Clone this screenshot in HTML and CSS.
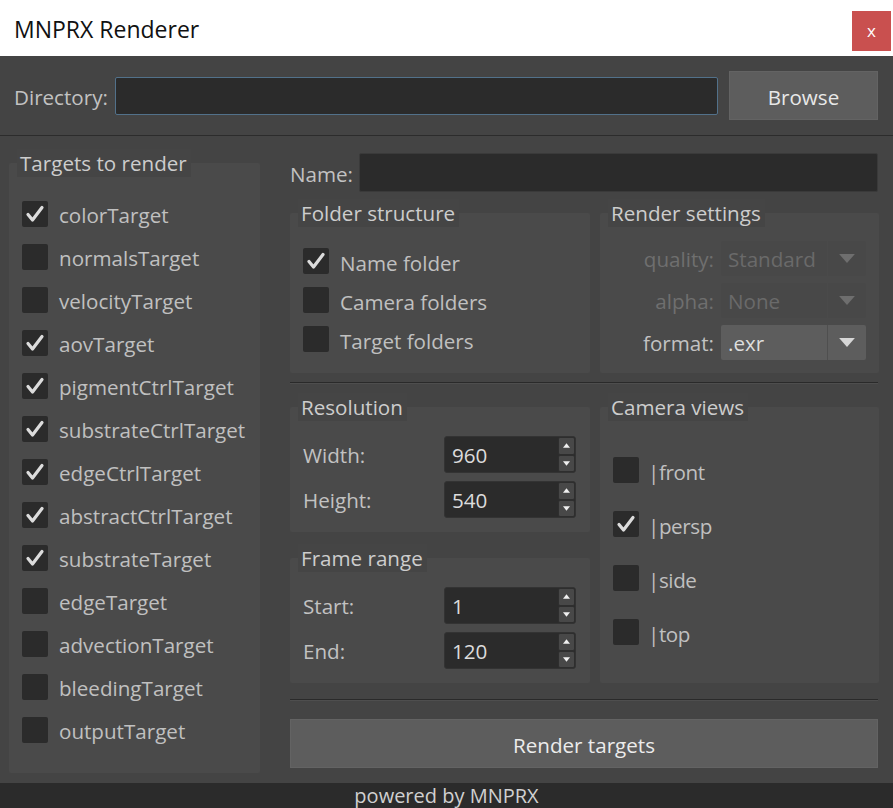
FILE: index.html
```html
<!DOCTYPE html>
<html>
<head>
<meta charset="utf-8">
<link rel="stylesheet" href="styles.css">
</head>
<body>
<div class="window">
  <header class="titlebar">
    <span class="title">MNPRX Renderer</span>
    <div class="close">x</div>
  </header>
  <div class="dirrow">
    <span class="lbl">Directory:</span>
    <div class="input dir"></div>
    <div class="btn browse">Browse</div>
  </div>
  <div class="main">
    <section class="group targets">
      <div class="gtitle">Targets to render</div>
      <div class="gbody list">
        <div class="chkrow"><span class="chk on"><svg viewBox="0 0 26 26"><polyline points="6,13.5 10.5,19 20,6.5"/></svg></span><span class="clbl">colorTarget</span></div>
        <div class="chkrow"><span class="chk"></span><span class="clbl">normalsTarget</span></div>
        <div class="chkrow"><span class="chk"></span><span class="clbl">velocityTarget</span></div>
        <div class="chkrow"><span class="chk on"><svg viewBox="0 0 26 26"><polyline points="6,13.5 10.5,19 20,6.5"/></svg></span><span class="clbl">aovTarget</span></div>
        <div class="chkrow"><span class="chk on"><svg viewBox="0 0 26 26"><polyline points="6,13.5 10.5,19 20,6.5"/></svg></span><span class="clbl">pigmentCtrlTarget</span></div>
        <div class="chkrow"><span class="chk on"><svg viewBox="0 0 26 26"><polyline points="6,13.5 10.5,19 20,6.5"/></svg></span><span class="clbl">substrateCtrlTarget</span></div>
        <div class="chkrow"><span class="chk on"><svg viewBox="0 0 26 26"><polyline points="6,13.5 10.5,19 20,6.5"/></svg></span><span class="clbl">edgeCtrlTarget</span></div>
        <div class="chkrow"><span class="chk on"><svg viewBox="0 0 26 26"><polyline points="6,13.5 10.5,19 20,6.5"/></svg></span><span class="clbl">abstractCtrlTarget</span></div>
        <div class="chkrow"><span class="chk on"><svg viewBox="0 0 26 26"><polyline points="6,13.5 10.5,19 20,6.5"/></svg></span><span class="clbl">substrateTarget</span></div>
        <div class="chkrow"><span class="chk"></span><span class="clbl">edgeTarget</span></div>
        <div class="chkrow"><span class="chk"></span><span class="clbl">advectionTarget</span></div>
        <div class="chkrow"><span class="chk"></span><span class="clbl">bleedingTarget</span></div>
        <div class="chkrow"><span class="chk"></span><span class="clbl">outputTarget</span></div>
      </div>
    </section>
    <div class="right">
      <div class="namerow">
        <span class="lbl">Name:</span>
        <div class="input name"></div>
      </div>
      <div class="row2">
        <section class="group folder">
          <div class="gtitle">Folder structure</div>
          <div class="gbody">
            <div class="chkrow short"><span class="chk on"><svg viewBox="0 0 26 26"><polyline points="6,13.5 10.5,19 20,6.5"/></svg></span><span class="clbl">Name folder</span></div>
            <div class="chkrow short"><span class="chk"></span><span class="clbl">Camera folders</span></div>
            <div class="chkrow short"><span class="chk"></span><span class="clbl">Target folders</span></div>
          </div>
        </section>
        <section class="group settings">
          <div class="gtitle">Render settings</div>
          <div class="gbody formgrid">
            <span class="flbl dis">quality:</span>
            <div class="combo dis"><span class="ctext">Standard</span><span class="carrow"><svg viewBox="0 0 14 8"><polygon points="0,0 14,0 7,8"/></svg></span></div>
            <span class="flbl dis">alpha:</span>
            <div class="combo dis"><span class="ctext">None</span><span class="carrow"><svg viewBox="0 0 14 8"><polygon points="0,0 14,0 7,8"/></svg></span></div>
            <span class="flbl">format:</span>
            <div class="combo"><span class="ctext">.exr</span><span class="carrow"><svg viewBox="0 0 14 8"><polygon points="0,0 14,0 7,8"/></svg></span></div>
          </div>
        </section>
      </div>
      <div class="sep"></div>
      <div class="row3">
        <div class="col">
          <section class="group spins">
            <div class="gtitle">Resolution</div>
            <div class="gbody spingrid">
              <span class="slbl">Width:</span>
              <div class="spin"><span class="sval">960</span><span class="sarrows"><span class="sbtn"><svg viewBox="0 0 8 5"><polygon points="0,5 8,5 4,0"/></svg></span><span class="sbtn"><svg viewBox="0 0 8 5"><polygon points="0,0 8,0 4,5"/></svg></span></span></div>
              <span class="slbl">Height:</span>
              <div class="spin"><span class="sval">540</span><span class="sarrows"><span class="sbtn"><svg viewBox="0 0 8 5"><polygon points="0,5 8,5 4,0"/></svg></span><span class="sbtn"><svg viewBox="0 0 8 5"><polygon points="0,0 8,0 4,5"/></svg></span></span></div>
            </div>
          </section>
          <section class="group spins frame">
            <div class="gtitle">Frame range</div>
            <div class="gbody spingrid">
              <span class="slbl">Start:</span>
              <div class="spin"><span class="sval">1</span><span class="sarrows"><span class="sbtn"><svg viewBox="0 0 8 5"><polygon points="0,5 8,5 4,0"/></svg></span><span class="sbtn"><svg viewBox="0 0 8 5"><polygon points="0,0 8,0 4,5"/></svg></span></span></div>
              <span class="slbl">End:</span>
              <div class="spin"><span class="sval">120</span><span class="sarrows"><span class="sbtn"><svg viewBox="0 0 8 5"><polygon points="0,5 8,5 4,0"/></svg></span><span class="sbtn"><svg viewBox="0 0 8 5"><polygon points="0,0 8,0 4,5"/></svg></span></span></div>
            </div>
          </section>
        </div>
        <section class="group cams">
          <div class="gtitle">Camera views</div>
          <div class="gbody">
            <div class="chkrow tall"><span class="chk"></span><span class="clbl cam">|front</span></div>
            <div class="chkrow tall"><span class="chk on"><svg viewBox="0 0 26 26"><polyline points="6,13.5 10.5,19 20,6.5"/></svg></span><span class="clbl cam">|persp</span></div>
            <div class="chkrow tall"><span class="chk"></span><span class="clbl cam">|side</span></div>
            <div class="chkrow tall"><span class="chk"></span><span class="clbl cam">|top</span></div>
          </div>
        </section>
      </div>
      <div class="sep sep2"></div>
      <div class="btn render">Render targets</div>
    </div>
  </div>
  <footer class="footer">powered by MNPRX</footer>
</div>
</body>
</html>
```

FILE: styles.css
```css
* { box-sizing: border-box; }
html, body { margin: 0; padding: 0; background: #444444; }
body { font-family: "Open Sans", "Noto Sans", sans-serif; font-size: 20.6px; color: #c4c4c4; }

.window { width: 893px; height: 808px; display: flex; flex-direction: column; background: #444444; overflow: hidden; }

.titlebar { height: 56px; flex: none; background: #ffffff; display: flex; justify-content: space-between; align-items: flex-start; }
.title { margin-left: 14px; line-height: 56px; padding-top: 1px; font-size: 23px; color: #111111; }
.close { margin-top: 11px; margin-right: 2px; width: 39px; height: 40px; background: #c9504f; color: #ffffff; font-size: 17px; line-height: 40px; text-align: center; }

.dirrow { height: 80px; flex: none; display: flex; align-items: center; padding: 0 15px 0 14px; border-bottom: 1px solid #2c2c2c; }
.lbl { flex: none; color: #c2c2c2; padding-top: 3px; }
.input { background: #2b2b2b; border: 1px solid #3a3a3a; border-radius: 2px; }
.input.dir { flex: 1; height: 38px; margin-left: 7px; border-color: #52718a; }
.btn { background: #5d5d5d; border: 1px solid #636363; color: #e8e8e8; display: flex; align-items: center; justify-content: center; padding-top: 3px; }
.browse { width: 149px; height: 49px; margin-left: 11px; margin-top: -1px; }

.main { flex: 1; display: flex; min-height: 0; }

.group { display: flex; flex-direction: column; align-items: flex-start; background: #4a4a4a; margin-top: 14px; border-radius: 2px; }
.gtitle { margin-top: -14px; margin-left: 8px; height: 28px; line-height: 27px; padding: 1px 4px 0 3px; background: #454545; color: #cdcdcd; }
.gbody { align-self: stretch; }

.targets { width: 251px; margin: 27px 0 10px 9px; }
.list { padding: 15px 0 0 13px; }

.chkrow { display: flex; align-items: center; height: 43px; }
.chkrow.short { height: 39px; }
.chkrow.tall { height: 54px; }
.chk { width: 26px; height: 26px; flex: none; background: #2b2b2b; border-radius: 2px; display: flex; }
.chk svg { width: 26px; height: 26px; }
.chk polyline { fill: none; stroke: #dcdcdc; stroke-width: 3.2; stroke-linecap: round; stroke-linejoin: round; }
.clbl { margin-left: 11px; color: #c0c0c0; white-space: nowrap; padding-top: 3px; }
.short .clbl { padding-top: 4px; }
.clbl.cam { margin-left: 9px; letter-spacing: -0.4px; }

.right { width: 589px; margin-left: 30px; display: flex; flex-direction: column; }
.namerow { display: flex; align-items: center; margin-top: 17px; height: 39px; }
.input.name { flex: 1; height: 39px; margin-left: 6px; margin-right: 1px; }

.row2 { display: flex; gap: 10px; margin-top: 7px; }
.folder { width: 300px; height: 160px; }
.folder .gbody { padding: 14px 0 0 13px; }
.settings { width: 279px; height: 160px; }
.formgrid { display: grid; grid-template-columns: 1fr 145px; grid-auto-rows: 35px; column-gap: 7px; row-gap: 7px; padding: 14px 13px 0 0; }
.flbl { text-align: right; line-height: 33px; padding-top: 2px; color: #c2c2c2; }
.flbl.dis { color: #6f6f6f; }
.combo { display: flex; background: #5d5d5d; border-radius: 2px; color: #dedede; }
.ctext { flex: 1; padding-left: 7px; padding-top: 2px; line-height: 33px; }
.carrow { width: 39px; flex: none; border-left: 1px solid #4f4f4f; display: flex; align-items: center; justify-content: center; }
.carrow svg { width: 16px; height: 9px; }
.carrow polygon { fill: #d6d6d6; }
.combo.dis { background: #484848; color: #6a6a6a; }
.combo.dis .carrow { border-left-color: #4a4a4a; }
.combo.dis polygon { fill: #6e6e6e; }

.sep { height: 2px; border-top: 1px solid #2a2a2a; border-bottom: 1px solid #4e4e4e; margin-top: 9px; margin-right: 1px; }
.sep2 { margin-top: 16px; }

.row3 { display: flex; gap: 10px; margin-top: 9px; }
.col { width: 300px; display: flex; flex-direction: column; }
.spins { height: 125px; }
.frame { margin-top: 26px; }
.spingrid { display: grid; grid-template-columns: 141px 132px; grid-auto-rows: 37px; row-gap: 8px; padding: 15px 0 0 13px; }
.slbl { line-height: 35px; padding-top: 2px; color: #c2c2c2; }
.spin { display: flex; background: #2b2b2b; border: 1px solid #333333; border-radius: 3px; }
.sval { flex: 1; padding-left: 7px; padding-top: 2px; line-height: 33px; color: #dcdcdc; }
.sarrows { width: 17px; display: flex; flex-direction: column; }
.sbtn { flex: 1; background: #484848; border: 1px solid #2e2e2e; border-radius: 2px; display: flex; align-items: center; justify-content: center; }
.sbtn svg { width: 7px; height: 5px; }
.sbtn polygon { fill: #f0f0f0; }

.cams { width: 279px; height: 276px; }
.cams .gbody { padding: 22px 0 0 13px; }

.render { height: 49px; margin-top: 18px; width: 588px; color: #ececec; }

.footer { height: 25px; flex: none; background: #2b2b2b; text-align: center; font-size: 20px; line-height: 25px; color: #d0d0d0; }
```
